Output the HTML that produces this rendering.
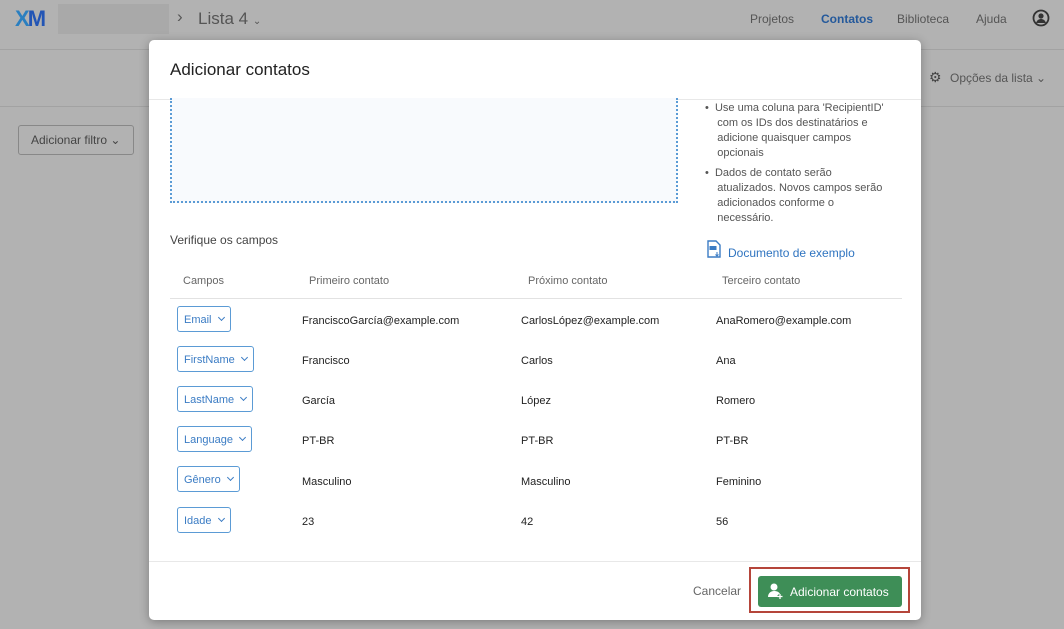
<!DOCTYPE html><html><head><meta charset="utf-8"><style>
*{box-sizing:border-box;margin:0;padding:0}
body{width:1064px;height:629px;overflow:hidden;background:#b2b2b2;font-family:"Liberation Sans",sans-serif;position:relative;color:#333}
.a{position:absolute;white-space:nowrap}
.ln{position:absolute;left:0;width:1064px;height:1px;background:#a2a2a2}
.modal{position:absolute;left:149px;top:40px;width:772px;height:580px;background:#fff;border-radius:5px;box-shadow:0 2px 10px rgba(0,0,0,.3);overflow:hidden}
.m{position:absolute;white-space:nowrap;font-size:11px;color:#222}
.sel{position:absolute;height:26px;border:1px solid #5b9bd5;border-radius:3px;color:#3b7cc4;font-size:11px;padding:7px 6px;line-height:12px}
.sel:after{content:"";display:inline-block;width:4px;height:4px;border-right:1px solid #3b7cc4;border-bottom:1px solid #3b7cc4;transform:rotate(45deg);margin-left:7px;vertical-align:3px}
.th{position:absolute;font-size:11px;color:#666;top:235px}
.bl{position:absolute;font-size:11px;color:#555;line-height:15px;width:200px}
</style></head><body>
<div class="a" style="left:15px;top:6px;font-size:22px;font-weight:bold;letter-spacing:-2px;color:#2a7fc0">X<span style="color:#2355b5">M</span></div>
<div class="a" style="left:58px;top:4px;width:111px;height:30px;background:#a9a9a9"></div>
<div class="a" style="left:177px;top:7px;font-size:17px;color:#555">›</div>
<div class="a" style="left:198px;top:9px;font-size:17px;color:#555">Lista 4 <span style="font-size:10px">⌄</span></div>
<div class="a" style="left:750px;top:12px;font-size:12px;color:#555">Projetos</div>
<div class="a" style="left:821px;top:12px;font-size:12px;color:#24599b;font-weight:bold">Contatos</div>
<div class="a" style="left:897px;top:12px;font-size:12px;color:#555">Biblioteca</div>
<div class="a" style="left:976px;top:12px;font-size:12px;color:#555">Ajuda</div>
<svg class="a" style="left:1032px;top:9px" width="18" height="18" viewBox="0 0 18 18"><circle cx="9" cy="9" r="7.5" fill="none" stroke="#333" stroke-width="1.8"/><circle cx="9" cy="7" r="2.6" fill="#333"/><path d="M4 14c1-3 3-4 5-4s4 1 5 4" fill="#333"/></svg>
<div class="ln" style="top:49px"></div>
<div class="ln" style="top:106px"></div>
<div class="a" style="left:929px;top:69px;font-size:14px;color:#444">⚙</div>
<div class="a" style="left:950px;top:71px;font-size:12px;color:#555">Opções da lista ⌄</div>
<div class="a" style="left:18px;top:125px;width:116px;height:30px;border:1px solid #888;border-radius:3px;font-size:12px;color:#444;padding:7px 12px">Adicionar filtro ⌄</div>

<div class="modal">
<div class="m" style="left:21px;top:20px;font-size:17px;color:#222">Adicionar contatos</div>
<div style="position:absolute;left:0;top:59px;width:772px;height:1px;background:#e8e8e8"></div>
<div style="position:absolute;left:21px;top:58px;width:508px;height:105px;background:#f8fafd;border:2px dotted #5b9bd5;border-top:none"></div>
<div class="bl" style="left:556px;top:61px">•&nbsp;&nbsp;Use uma coluna para 'RecipientID'<br>&nbsp;&nbsp;&nbsp;&nbsp;com os IDs dos destinatários e<br>&nbsp;&nbsp;&nbsp;&nbsp;adicione quaisquer campos<br>&nbsp;&nbsp;&nbsp;&nbsp;opcionais</div>
<div class="bl" style="left:556px;top:126px">•&nbsp;&nbsp;Dados de contato serão<br>&nbsp;&nbsp;&nbsp;&nbsp;atualizados. Novos campos serão<br>&nbsp;&nbsp;&nbsp;&nbsp;adicionados conforme o<br>&nbsp;&nbsp;&nbsp;&nbsp;necessário.</div>
<div class="m" style="left:21px;top:193px;font-size:12px;color:#444">Verifique os campos</div>
<svg class="a" style="left:558px;top:200px" width="15" height="18" viewBox="0 0 15 18"><path d="M1 1h8l4 4v12H1z" fill="none" stroke="#3b7cc4" stroke-width="1.4"/><rect x="2.5" y="6" width="7" height="4" fill="#3b7cc4"/><path d="M10 12v4M8.5 14.5l1.5 1.5 1.5-1.5" stroke="#3b7cc4" fill="none"/></svg>
<div class="m" style="left:579px;top:206px;font-size:12px;color:#2f74c0">Documento de exemplo</div>
<div class="th" style="left:34px">Campos</div><div class="th" style="left:160px">Primeiro contato</div><div class="th" style="left:379px">Próximo contato</div><div class="th" style="left:573px">Terceiro contato</div>
<div style="position:absolute;left:21px;top:258px;width:732px;height:1px;background:#e2e2e2"></div>
<div class="sel" style="left:28px;top:266px">Email</div>
<div class="sel" style="left:28px;top:306px">FirstName</div>
<div class="sel" style="left:28px;top:346px">LastName</div>
<div class="sel" style="left:28px;top:386px">Language</div>
<div class="sel" style="left:28px;top:426px">Gênero</div>
<div class="sel" style="left:28px;top:467px">Idade</div>
<div class="m" style="left:153px;top:275px">FranciscoGarcía@example.com</div><div class="m" style="left:372px;top:275px">CarlosLópez@example.com</div><div class="m" style="left:567px;top:275px">AnaRomero@example.com</div>
<div class="m" style="left:153px;top:315px">Francisco</div><div class="m" style="left:372px;top:315px">Carlos</div><div class="m" style="left:567px;top:315px">Ana</div>
<div class="m" style="left:153px;top:355px">García</div><div class="m" style="left:372px;top:355px">López</div><div class="m" style="left:567px;top:355px">Romero</div>
<div class="m" style="left:153px;top:395px">PT-BR</div><div class="m" style="left:372px;top:395px">PT-BR</div><div class="m" style="left:567px;top:395px">PT-BR</div>
<div class="m" style="left:153px;top:436px">Masculino</div><div class="m" style="left:372px;top:436px">Masculino</div><div class="m" style="left:567px;top:436px">Feminino</div>
<div class="m" style="left:153px;top:476px">23</div><div class="m" style="left:372px;top:476px">42</div><div class="m" style="left:567px;top:476px">56</div>
<div style="position:absolute;left:0;top:521px;width:772px;height:1px;background:#e8e8e8"></div>
<div class="m" style="left:544px;top:544px;font-size:12px;color:#666">Cancelar</div>
<div style="position:absolute;left:600px;top:527px;width:161px;height:46px;border:2px solid #b5453a"></div>
<div style="position:absolute;left:609px;top:536px;width:144px;height:31px;background:#3e8e57;border-radius:3px;color:#fff;font-size:12px;padding:9px 0 0 32px">Adicionar contatos</div>
<svg style="position:absolute;left:618px;top:542px" width="18" height="18" viewBox="0 0 18 18"><circle cx="7" cy="5" r="3.5" fill="#fff"/><path d="M1 15c0-4 3-6 6-6s5 1 6 3v3z" fill="#fff"/><path d="M13 12v5M10.5 14.5h5" stroke="#3e8e57" stroke-width="3"/><path d="M13 12v5M10.5 14.5h5" stroke="#fff" stroke-width="1.3"/></svg>
</div>
</body></html>
